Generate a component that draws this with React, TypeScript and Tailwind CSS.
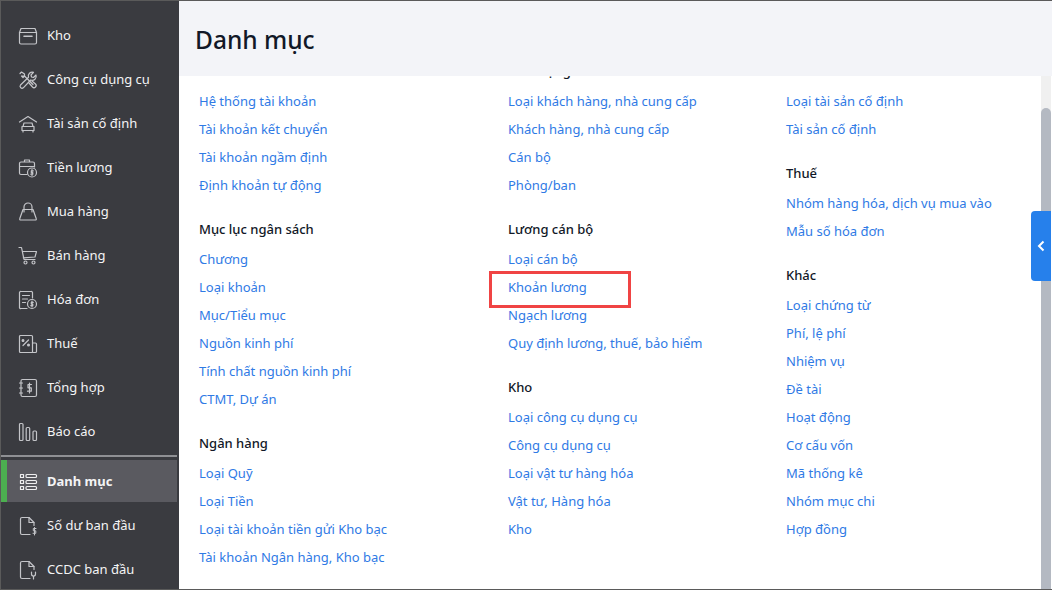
import React from "react";

const font = "font-['Noto_Sans',sans-serif]";

const Ico = ({ children }: { children: React.ReactNode }) => (
  <svg width="20" height="20" viewBox="0 0 20 20" fill="none" stroke="#c4c5c9" strokeWidth="1.2" strokeLinecap="round" strokeLinejoin="round">
    {children}
  </svg>
);

const menu = [
  {
    label: "Kho",
    icon: (
      <>
        <path d="M3 2.500h14l1.500 4v10a1.500 1.500 0 0 1-1.500 1.500H3a1.500 1.500 0 0 1-1.500-1.500v-10z" />
        <path d="M1.500 6.500h17" />
        <path d="M6 10.300h8" strokeWidth="1.600" />
      </>
    ),
  },
  {
    label: "Công cụ dụng cụ",
    icon: (
      <>
        <path d="M2 3.500 3.500 2l3 2v2l8.500 8.500M6.500 6 5 7.500 3.500 6z" />
        <path d="M18 5l-2.500 2.500-2-.5-.5-2L15.500 2.300a4 4 0 0 0-5 5L2.500 15a2 2 0 0 0 2.800 2.800l7.400-7.800a4 4 0 0 0 5.300-5z" />
        <path d="m11 13 3.500 4a2 2 0 0 0 3-3L14 11" />
      </>
    ),
  },
  {
    label: "Tài sản cố định",
    icon: (
      <>
        <path d="M1.500 8 10 2.500 18.500 8" />
        <path d="M5 12.500 6 9h8l1 3.500M4 12.500h12v4H4zM5 16.500V18M15 16.500V18" />
      </>
    ),
  },
  {
    label: "Tiền lương",
    icon: (
      <>
        <path d="M9 16.500H3A1.500 1.500 0 0 1 1.500 15V5.500A1.500 1.500 0 0 1 3 4h12a1.500 1.500 0 0 1 1.500 1.500V9M1.500 8.500h15M6.500 4V2h5v2" />
        <circle cx="14" cy="14.500" r="4.500" />
        <path d="M14 11.500v6M15.300 12.800h-2v1.700h1.500v1.700h-2" />
      </>
    ),
  },
  {
    label: "Mua hàng",
    icon: (
      <>
        <path d="M5 7.500 1.800 16.500a1 1 0 0 0 1 1.500h14.400a1 1 0 0 0 1-1.500L15 7.500z" />
        <path d="M6 10V5a4 4 0 0 1 8 0v5" />
      </>
    ),
  },
  {
    label: "Bán hàng",
    icon: (
      <>
        <path d="M1 1.500h2.500L6 13.500h11M4.300 5.500h14.200l-1.500 5.500-11.700.8" />
        <circle cx="7.500" cy="16.500" r="1.500" />
        <circle cx="15.500" cy="16.500" r="1.500" />
      </>
    ),
  },
  {
    label: "Hóa đơn",
    icon: (
      <>
        <path d="M9 18.500H3A1.200 1.200 0 0 1 1.500 17V2.500A1.200 1.200 0 0 1 3 1.500h10a1.200 1.200 0 0 1 1.500 1V8" />
        <path d="M4.500 5.500h7M4.500 9h5M4.500 12.500h3" />
        <circle cx="14" cy="14" r="4.500" />
        <path d="M14 11v6M15.300 12.300h-2V14h1.500v1.700h-2" />
      </>
    ),
  },
  {
    label: "Thuế",
    icon: (
      <>
        <path d="M2.500 1.500h11a1 1 0 0 1 1 1v16h-12a1 1 0 0 1-1-1v-15a1 1 0 0 1 1-1z" />
        <path d="M14.500 9h3a1 1 0 0 1 1 1v7.500a1 1 0 0 1-1 1h-3" />
        <path d="M5 11.500 10.500 6" />
        <circle cx="5" cy="6.500" r=".9" fill="#c4c5c9" />
        <circle cx="10.500" cy="11" r=".9" fill="#c4c5c9" />
      </>
    ),
  },
  {
    label: "Tổng hợp",
    icon: (
      <>
        <rect x="3" y="1.500" width="15.500" height="17" rx="1.500" />
        <path d="M1.500 5h3M1.500 10h3M1.500 15h3" />
        <path d="M13.500 6.500h-3.500v3.300h3.300v3.400H9.500M11.500 5v10" />
      </>
    ),
  },
  {
    label: "Báo cáo",
    icon: (
      <>
        <rect x="1.500" y="1.500" width="3.500" height="17" rx="1" />
        <rect x="8.200" y="5.500" width="3.500" height="13" rx="1" />
        <rect x="15" y="9" width="3.500" height="9.500" rx="1" />
      </>
    ),
  },
];

const bottomMenu = [
  {
    label: "Số dư ban đầu",
    icon: (
      <>
        <path d="M12 18.500H4a1.500 1.500 0 0 1-1.500-1.500V3A1.500 1.500 0 0 1 4 1.500h7l5 5v3" />
        <path d="M11 1.500V6.500h5" />
        <path d="M18 12.500h-2.700v2.300h2.500v2.500H15M16.500 11.500v7.500" strokeWidth="1" />
      </>
    ),
  },
  {
    label: "CCDC ban đầu",
    icon: (
      <>
        <path d="M12 18.500H4a1.500 1.500 0 0 1-1.500-1.500V3A1.500 1.500 0 0 1 4 1.500h7l5 5v3" />
        <path d="M11 1.500V6.500h5" />
        <path d="M13.500 12v2a2 2 0 0 0 4 0v-2M15.500 16v3" />
      </>
    ),
  },
];

type Group = { title: string; items: string[] };

const columns: Group[][] = [
  [
    { title: "Tài khoản", items: ["Hệ thống tài khoản", "Tài khoản kết chuyển", "Tài khoản ngầm định", "Định khoản tự động"] },
    { title: "Mục lục ngân sách", items: ["Chương", "Loại khoản", "Mục/Tiểu mục", "Nguồn kinh phí", "Tính chất nguồn kinh phí", "CTMT, Dự án"] },
    { title: "Ngân hàng", items: ["Loại Quỹ", "Loại Tiền", "Loại tài khoản tiền gửi Kho bạc", "Tài khoản Ngân hàng, Kho bạc"] },
  ],
  [
    { title: "Đối tượng", items: ["Loại khách hàng, nhà cung cấp", "Khách hàng, nhà cung cấp", "Cán bộ", "Phòng/ban"] },
    { title: "Lương cán bộ", items: ["Loại cán bộ", "Khoản lương", "Ngạch lương", "Quy định lương, thuế, bảo hiểm"] },
    { title: "Kho", items: ["Loại công cụ dụng cụ", "Công cụ dụng cụ", "Loại vật tư hàng hóa", "Vật tư, Hàng hóa", "Kho"] },
  ],
  [
    { title: "Tài sản", items: ["Loại tài sản cố định", "Tài sản cố định"] },
    { title: "Thuế", items: ["Nhóm hàng hóa, dịch vụ mua vào", "Mẫu số hóa đơn"] },
    { title: "Khác", items: ["Loại chứng từ", "Phí, lệ phí", "Nhiệm vụ", "Đề tài", "Hoạt động", "Cơ cấu vốn", "Mã thống kê", "Nhóm mục chi", "Hợp đồng"] },
  ],
];

const MenuItem = ({ label, icon }: { label: string; icon: React.ReactNode }) => (
  <div className="h-11 flex items-center pl-[17px] gap-[9px] text-[13px] text-[#f4f4f5] shrink-0">
    <Ico>{icon}</Ico>
    <span>{label}</span>
  </div>
);

const Column = ({ groups, width }: { groups: Group[]; width: string }) => (
  <div className={`${width} shrink-0 flex flex-col`}>
    {groups.map((g) => (
      <div key={g.title} className="mb-[16px]">
        <div className="h-7 mb-[2px] flex items-center text-[13px] font-medium text-[#111827]">{g.title}</div>
        {g.items.map((item) => (
          <div key={item} className="h-7 flex items-center text-[13px] text-[#2f7ae5]">
            {item === "Khoản lương" ? (
              <span className="relative">
                {item}
                <span className="absolute left-[-19px] top-[-7px] w-[142px] h-[37px] border-[3px] border-[#f04444]" />
              </span>
            ) : (
              item
            )}
          </div>
        ))}
      </div>
    ))}
  </div>
);

export default function App() {
  return (
    <div className={`${font} w-[1052px] h-[590px] flex overflow-hidden bg-white border border-[#5a5a5a] border-r-0 box-border`}>
      <aside className="w-[178px] shrink-0 bg-[#3a3b40] flex flex-col overflow-hidden pt-[13px]">
        {menu.map((m) => (
          <MenuItem key={m.label} label={m.label} icon={m.icon} />
        ))}
        <div className="h-[2px] bg-[#8f9094] mt-[1px] mr-[2px] shrink-0" />
        <div className="h-[42px] mt-[3px] mb-[2px] mr-[2px] pt-px bg-[#5a5a60] border-l-[6px] border-[#4caf50] flex items-center pl-[11px] gap-[9px] text-[13px] font-bold text-[#f4f4f5] shrink-0">
          <Ico>
            <g stroke="#eeeeef">
              <rect x="2.500" y="2.500" width="3" height="3" />
              <rect x="2.500" y="8.500" width="3" height="3" />
              <rect x="2.500" y="14.500" width="3" height="3" />
              <rect x="8" y="2.500" width="10.500" height="3" rx="1" />
              <rect x="8" y="8.500" width="10.500" height="3" rx="1" />
              <rect x="8" y="14.500" width="10.500" height="3" rx="1" />
            </g>
          </Ico>
          <span>Danh mục</span>
        </div>
        {bottomMenu.map((m) => (
          <MenuItem key={m.label} label={m.label} icon={m.icon} />
        ))}
      </aside>
      <main className="flex-1 min-w-0 flex flex-col relative">
        <header className="h-[75px] shrink-0 bg-[#f3f4f8] flex items-center pl-[16px] pt-[4px] text-[24.5px] font-medium text-[#111827]">
          Danh mục
        </header>
        <div className="flex-1 min-h-0 flex overflow-hidden">
          <div className="flex-1 min-w-0 overflow-hidden">
            <div className="flex pl-[20px] -mt-[18px]">
              <Column groups={columns[0]} width="w-[309px]" />
              <Column groups={columns[1]} width="w-[278px]" />
              <Column groups={columns[2]} width="w-[240px]" />
            </div>
          </div>
          <div className="w-[10px] shrink-0 bg-[#f0f0f0] flex flex-col pt-[32px] mr-px">
            <div className="flex-1 bg-[#b4b9c2] rounded-t-[5px]" />
          </div>
        </div>
        <button className="absolute right-px top-[210px] w-[20px] h-[70px] bg-[#2680eb] rounded-l-[4px] flex items-center justify-center">
          <svg width="8" height="12" viewBox="0 0 8 12" fill="none" stroke="#fff" strokeWidth="2">
            <path d="M6.500 1.500 2 6l4.500 4.500" />
          </svg>
        </button>
      </main>
    </div>
  );
}
